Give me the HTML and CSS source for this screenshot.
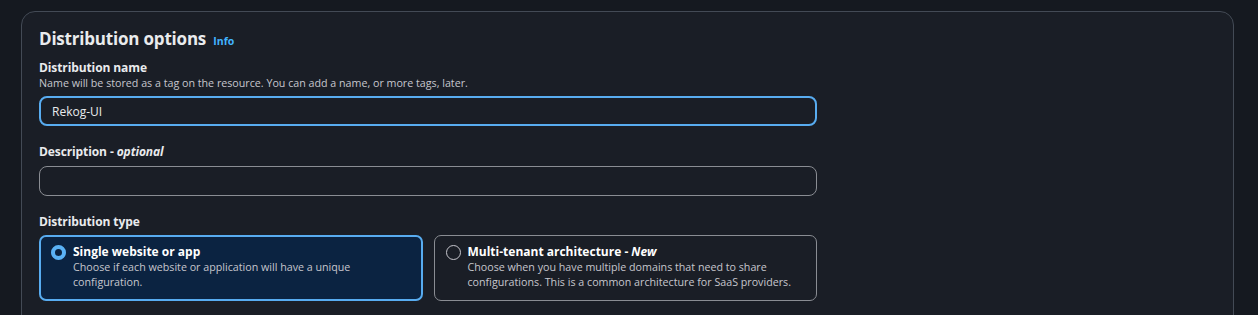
FILE: index.html
```html
<!DOCTYPE html>
<html lang="en">
<head>
  <meta charset="UTF-8" />
  <title>Distribution options</title>
  <link rel="stylesheet" href="styles.css">
</head>
<body>

  <section class="panel">
    <h2 class="panel-title">Distribution options <a href="#" class="info">Info</a></h2>

    <div class="field">
      <label class="field-label" for="dist-name">Distribution name</label>
      <div class="field-hint">Name will be stored as a tag on the resource. You can add a name, or more tags, later.</div>
      <input id="dist-name" class="text-input focused" type="text" value="Rekog-UI">
    </div>

    <div class="field">
      <label class="field-label" for="dist-desc">Description - <i>optional</i></label>
      <input id="dist-desc" class="text-input" type="text">
    </div>

    <div class="field">
      <div class="field-label">Distribution type</div>
      <div class="tiles">
        <label class="tile selected">
          <span class="radio"></span>
          <span class="tile-body">
            <span class="tile-title">Single website or app</span>
            <span class="tile-desc">Choose if each website or application will have a unique configuration.</span>
          </span>
        </label>
        <label class="tile">
          <span class="radio"></span>
          <span class="tile-body">
            <span class="tile-title">Multi-tenant architecture - <i>New</i></span>
            <span class="tile-desc">Choose when you have multiple domains that need to share configurations. This is a common architecture for SaaS providers.</span>
          </span>
        </label>
      </div>
    </div>
  </section>

</body>
</html>
```

FILE: styles.css
```css
* {
  box-sizing: border-box;
}

body {
  margin: 0;
  padding: 11px 24px 0 21px;
  background: #151920;
  font-family: 'Open Sans', 'Liberation Sans', sans-serif;
  color: #e9ebed;
  height: 315px;
  overflow: hidden;
}

.panel {
  background: #1a1e26;
  border: 1px solid #434a55;
  border-radius: 14px;
  padding: 14px 17px 0;
  height: 320px;
}

.panel-title {
  margin: 0 0 6px;
  font-size: 17px;
  font-weight: bold;
  line-height: 26px;
  letter-spacing: -0.2px;
}

.info {
  color: #42b4ff;
  font-size: 10.5px;
  font-weight: bold;
  text-decoration: none;
  margin-left: 3px;
  letter-spacing: 0;
}

.field {
  margin-bottom: 18px;
}

.field-label {
  display: block;
  font-size: 12px;
  font-weight: bold;
  line-height: 16px;
  letter-spacing: -0.1px;
}

.field-label i {
  font-weight: bold;
}

.field-hint {
  font-size: 10.7px;
  line-height: 14px;
  color: #c6c6cd;
}

.text-input {
  display: block;
  width: 778px;
  height: 30px;
  margin-top: 6px;
  padding: 0 11px;
  background: #1a1e26;
  border: 1px solid #8a8d93;
  border-radius: 8px;
  color: #e9ebed;
  font-family: inherit;
  font-size: 12px;
  outline: none;
}

.text-input.focused {
  border: 2px solid #58acf0;
}

/* radio tiles */
.tiles {
  display: grid;
  grid-template-columns: 1fr 1fr;
  gap: 11px;
  width: 778px;
  margin-top: 5px;
}

.tile {
  display: flex;
  gap: 7px;
  height: 66px;
  padding: 8px 12px 8px 11px;
  border: 1px solid #8a8d93;
  border-radius: 7px;
}

.tile.selected {
  border: 2px solid #58acf0;
  background: #0b2341;
  padding: 7px 12px 7px 10px;
}

.radio {
  flex: none;
  width: 15px;
  height: 15px;
  margin-top: 1px;
  border: 1.5px solid #c6c6cd;
  border-radius: 50%;
}

.selected .radio {
  border: 4px solid #5ab2f6;
  background: #0b2341;
}

.tile-body {
  display: flex;
  flex-direction: column;
}

.tile-title {
  font-size: 12px;
  line-height: 16px;
  font-weight: bold;
  color: #ffffff;
}

.tile-desc {
  font-size: 10.7px;
  line-height: 15px;
  color: #c6c6cd;
}
```
